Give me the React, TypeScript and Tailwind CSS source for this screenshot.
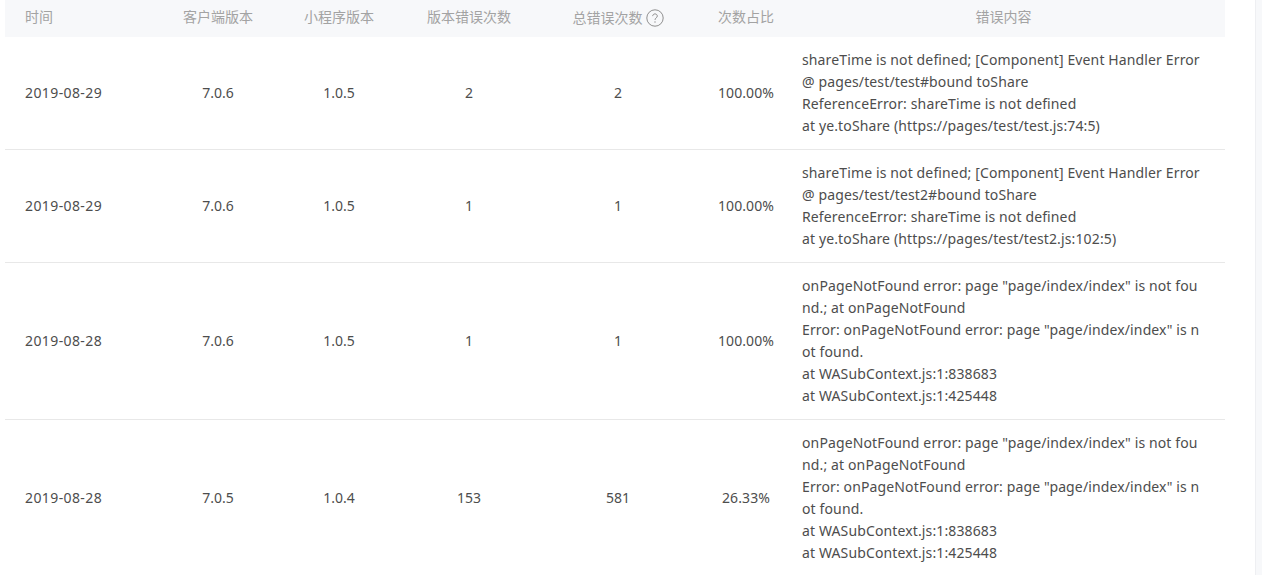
const rows = [
  { date: "2019-08-29", client: "7.0.6", mini: "1.0.5", ver: "2", total: "2", pct: "100.00%", lines: ["shareTime is not defined; [Component] Event Handler Error", "@ pages/test/test#bound toShare", "ReferenceError: shareTime is not defined", "at ye.toShare (https://pages/test/test.js:74:5)"] },
  { date: "2019-08-29", client: "7.0.6", mini: "1.0.5", ver: "1", total: "1", pct: "100.00%", lines: ["shareTime is not defined; [Component] Event Handler Error", "@ pages/test/test2#bound toShare", "ReferenceError: shareTime is not defined", "at ye.toShare (https://pages/test/test2.js:102:5)"] },
  { date: "2019-08-28", client: "7.0.6", mini: "1.0.5", ver: "1", total: "1", pct: "100.00%", lines: ["onPageNotFound error: page \"page/index/index\" is not fou", "nd.; at onPageNotFound", "Error: onPageNotFound error: page \"page/index/index\" is n", "ot found.", "at WASubContext.js:1:838683", "at WASubContext.js:1:425448"] },
  { date: "2019-08-28", client: "7.0.5", mini: "1.0.4", ver: "153", total: "581", pct: "26.33%", lines: ["onPageNotFound error: page \"page/index/index\" is not fou", "nd.; at onPageNotFound", "Error: onPageNotFound error: page \"page/index/index\" is n", "ot found.", "at WASubContext.js:1:838683", "at WASubContext.js:1:425448"] },
];

function Help() {
  return (
    <svg width="18" height="18" viewBox="0 0 18 18" fill="none" className="ml-[3px] shrink-0">
      <circle cx="9" cy="9" r="8.2" stroke="#8f8f8f" strokeWidth="1" />
      <path d="M6.7 7.1c0-1.3 1-2.2 2.3-2.2s2.3.9 2.3 2.1c0 1.9-2.3 1.9-2.3 3.9" stroke="#8f8f8f" strokeWidth="1" />
      <circle cx="9" cy="13" r=".7" fill="#8f8f8f" />
    </svg>
  );
}

export default function App() {
  return (
    <div className="h-[575px] overflow-hidden bg-white flex font-['Noto_Sans','Noto_Sans_CJK_SC',sans-serif] text-sm text-[#4d4d4d]">
      <div className="flex-1 pl-[5px] pr-[30px] min-w-0">
        <table className="w-[1220px] table-fixed border-collapse">
          <thead>
            <tr className="h-[37px] bg-[#f7f8fa] text-sm text-[#a3a3a3] font-normal">
              <th className="w-[165px] pl-5 pb-[3px] text-left font-normal">时间</th>
              <th className="w-[96px] pb-[3px] text-center font-normal">客户端版本</th>
              <th className="w-[146px] pb-[3px] text-center font-normal">小程序版本</th>
              <th className="w-[114px] pb-[3px] text-center font-normal">版本错误次数</th>
              <th className="w-[184px] pb-[3px] font-normal">
                <span className="inline-flex items-center justify-center align-middle">总错误次数<Help /></span>
              </th>
              <th className="w-[72px] pb-[3px] text-center font-normal">次数占比</th>
              <th className="pb-[3px] text-center font-normal">错误内容</th>
            </tr>
          </thead>
          <tbody>
            {rows.map((r, i) => (
              <tr key={i} className="border-b border-[#e8e8e8]">
                <td className="pl-5 tracking-[0.4px]">{r.date}</td>
                <td className="text-center">{r.client}</td>
                <td className="text-center">{r.mini}</td>
                <td className="text-center">{r.ver}</td>
                <td className="text-center">{r.total}</td>
                <td className="text-center tracking-[0.1px]">{r.pct}</td>
                <td className="px-5 py-3 leading-[22px] tracking-[0.13px]">
                  {r.lines.map((l, j) => (
                    <div key={j} className="whitespace-nowrap">{l}</div>
                  ))}
                </td>
              </tr>
            ))}
          </tbody>
        </table>
      </div>
      <div className="w-[7px] h-full bg-[#f7f8fa] border-l border-[#eeeff2]" />
    </div>
  );
}
